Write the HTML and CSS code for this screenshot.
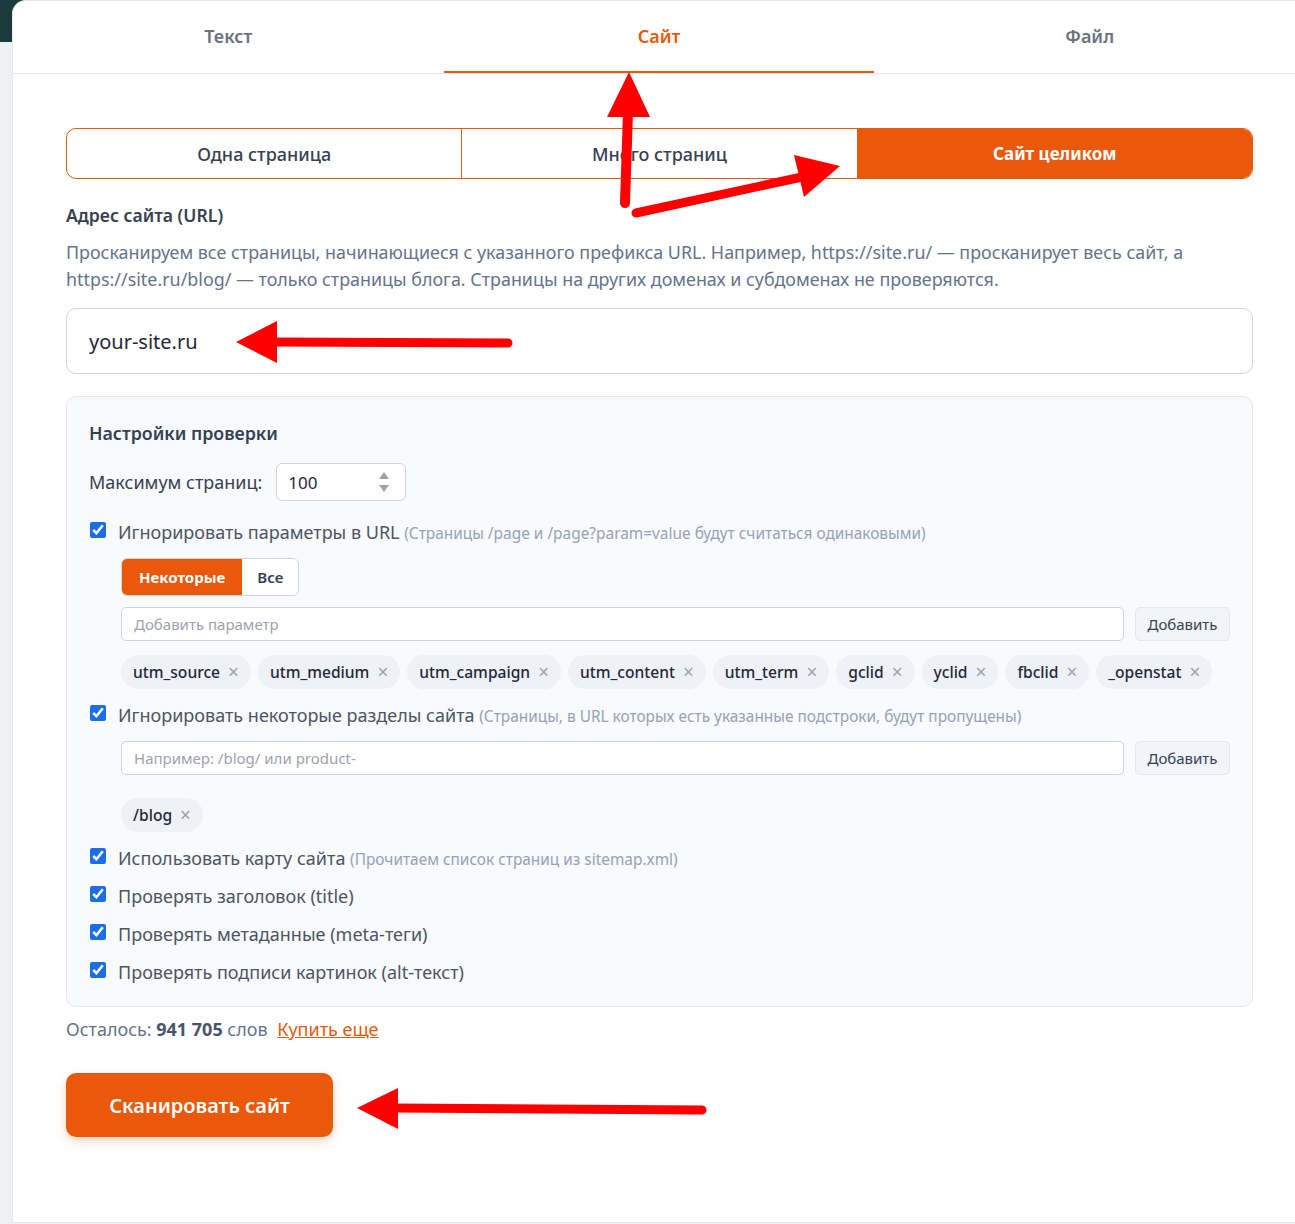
FILE: index.html
```html
<!DOCTYPE html>
<html lang="ru">
<head>
    <meta charset="UTF-8">
    <meta name="viewport" content="width=device-width, initial-scale=1.0">
    <title>Сканирование сайта</title>
    <link rel="stylesheet" href="styles.css">
</head>
<body>
    <div class="card">
        <nav class="tabs">
            <div class="tab">Текст</div>
            <div class="tab active">Сайт</div>
            <div class="tab">Файл</div>
        </nav>

        <div class="content">
            <div class="modes">
                <div class="mode">Одна страница</div>
                <div class="mode">Много страниц</div>
                <div class="mode active">Сайт целиком</div>
            </div>

            <div class="field-label">Адрес сайта (URL)</div>
            <p class="hint">Просканируем все страницы, начинающиеся с указанного префикса URL. Например, https://site.ru/ — просканирует весь сайт, а https://site.ru/blog/ — только страницы блога. Страницы на других доменах и субдоменах не проверяются.</p>
            <input class="url" type="text" value="your-site.ru">

            <div class="settings">
                <div class="settings-title">Настройки проверки</div>

                <div class="max-row">
                    <span>Максимум страниц:</span>
                    <div class="num">
                        <span>100</span>
                        <svg width="10" height="22" viewBox="0 0 10 22"><path d="M5 1 L10 8 L0 8 Z" fill="#9ca3af"/><path d="M5 21 L10 14 L0 14 Z" fill="#9ca3af"/></svg>
                    </div>
                </div>

                <label class="check">
                    <input type="checkbox" checked>
                    <span>Игнорировать параметры в URL <small>(Страницы /page и /page?param=value будут считаться одинаковыми)</small></span>
                </label>
                <div class="sub">
                    <div class="toggle">
                        <span class="on">Некоторые</span>
                        <span>Все</span>
                    </div>
                    <div class="add-row">
                        <input type="text" placeholder="Добавить параметр">
                        <button>Добавить</button>
                    </div>
                    <div class="chips">
                        <span class="chip">utm_source<i>×</i></span>
                        <span class="chip">utm_medium<i>×</i></span>
                        <span class="chip">utm_campaign<i>×</i></span>
                        <span class="chip">utm_content<i>×</i></span>
                        <span class="chip">utm_term<i>×</i></span>
                        <span class="chip">gclid<i>×</i></span>
                        <span class="chip">yclid<i>×</i></span>
                        <span class="chip">fbclid<i>×</i></span>
                        <span class="chip">_openstat<i>×</i></span>
                    </div>
                </div>

                <label class="check">
                    <input type="checkbox" checked>
                    <span>Игнорировать некоторые разделы сайта <small>(Страницы, в URL которых есть указанные подстроки, будут пропущены)</small></span>
                </label>
                <div class="sub">
                    <div class="add-row">
                        <input type="text" placeholder="Например: /blog/ или product-">
                        <button>Добавить</button>
                    </div>
                    <div class="chips spaced">
                        <span class="chip">/blog<i>×</i></span>
                    </div>
                </div>

                <label class="check">
                    <input type="checkbox" checked>
                    <span>Использовать карту сайта <small>(Прочитаем список страниц из sitemap.xml)</small></span>
                </label>
                <label class="check">
                    <input type="checkbox" checked>
                    <span>Проверять заголовок (title)</span>
                </label>
                <label class="check">
                    <input type="checkbox" checked>
                    <span>Проверять метаданные (meta-теги)</span>
                </label>
                <label class="check">
                    <input type="checkbox" checked>
                    <span>Проверять подписи картинок (alt-текст)</span>
                </label>
            </div>

            <div class="balance">Осталось: <b>941 705</b> слов <a href="#">Купить еще</a></div>

            <button class="scan">Сканировать сайт</button>
        </div>
    </div>

    <!-- красные стрелки поверх скриншота -->
    <svg class="marks" width="1295" height="1224" viewBox="0 0 1295 1224">
        <g stroke="#ff0000" stroke-linecap="round" fill="none">
            <line x1="625" y1="203" x2="628" y2="112" stroke-width="10"/>
            <line x1="636" y1="213" x2="802" y2="177" stroke-width="9"/>
            <line x1="508" y1="343" x2="272" y2="342" stroke-width="9"/>
            <line x1="702" y1="1110" x2="392" y2="1108" stroke-width="9"/>
        </g>
        <g fill="#ff0000">
            <polygon points="629,72 607,117 650,117"/>
            <polygon points="840,166 794,155 804,197"/>
            <polygon points="236,342 277,321 277,363"/>
            <polygon points="357,1108 398,1088 398,1129"/>
        </g>
    </svg>
</body>
</html>
```

FILE: styles.css
```css
body {
    margin: 0;
    font-family: "Noto Sans", "Open Sans", sans-serif;
    background: linear-gradient(#1c3a3b 0, #1c3a3b 42px, #eef0f3 42px);
    overflow: hidden;
    height: 1224px;
    position: relative;
}
.card {
    width: 1293px;
    margin-left: 12px;
    background: white;
    border: 1px solid #e2e8f0;
    border-right: none;
    border-radius: 14px 0 0 0;
    box-sizing: border-box;
    height: 1223px;
}
.tabs {
    display: flex;
    border-bottom: 1px solid #e5e7eb;
    height: 73px;
    box-sizing: border-box;
}
.tab {
    flex: 1;
    text-align: center;
    font-size: 18px;
    font-weight: 600;
    color: #6b7280;
    padding-top: 23px;
    box-sizing: border-box;
    height: 72px;
}
.tab.active {
    color: #ea580c;
    border-bottom: 2px solid #ea580c;
}
.content {
    padding: 54px 52px 0 53px;
}
.modes {
    display: flex;
    border: 1px solid #ea580c;
    border-radius: 10px;
    overflow: hidden;
    height: 51px;
    box-sizing: border-box;
}
.mode {
    flex: 1;
    display: flex;
    align-items: center;
    justify-content: center;
    font-size: 18px;
    font-weight: 500;
    color: #374151;
    border-left: 1px solid #ea580c;
}
.mode:first-child {
    border-left: none;
}
.mode.active {
    background: #ea580c;
    color: white;
    font-size: 17px;
    font-weight: 700;
}
.field-label {
    margin-top: 24px;
    font-size: 17.6px;
    font-weight: 600;
    color: #374151;
    line-height: 24px;
}
.hint {
    margin: 12px 0 15px;
    font-size: 17.9px;
    line-height: 27px;
    color: #64748b;
}
.url {
    display: block;
    width: 100%;
    height: 66px;
    box-sizing: border-box;
    border: 1px solid #d1d5db;
    border-radius: 10px;
    padding: 0 22px;
    font-family: inherit;
    font-size: 20px;
    color: #1f2937;
    outline: none;
}
.settings {
    margin-top: 22px;
    background: #f8fafc;
    border: 1px solid #e5e7eb;
    border-radius: 10px;
    padding: 24px 22px 20px;
}
.settings-title {
    font-size: 17.8px;
    font-weight: 600;
    color: #334155;
    line-height: 24px;
}
.max-row {
    display: flex;
    align-items: center;
    gap: 14px;
    margin-top: 18px;
    font-size: 18px;
    color: #374151;
}
.num {
    width: 130px;
    height: 38px;
    box-sizing: border-box;
    background: white;
    border: 1px solid #d1d5db;
    border-radius: 6px;
    display: flex;
    align-items: center;
    justify-content: space-between;
    padding: 0 16px 0 11px;
    font-size: 17px;
    color: #1f2937;
}
.check {
    display: flex;
    align-items: center;
    gap: 12px;
    height: 28px;
    margin-top: 17px;
    font-size: 18px;
    color: #4b5563;
}
.check input {
    width: 16px;
    height: 16px;
    margin: -4px 0 0 1px;
    accent-color: #1a6ee8;
}
.check small {
    font-size: 15.4px;
    color: #94a3b8;
}
.check + .check {
    margin-top: 10px;
}
.sub + .check {
    margin-top: 12px;
}
.sub {
    padding-left: 32px;
    margin-top: 12px;
}
.toggle {
    display: inline-flex;
    height: 38px;
    border: 1px solid #d1d5db;
    border-radius: 6px;
    overflow: hidden;
    background: white;
    box-sizing: border-box;
    margin-bottom: 11px;
}
.toggle span {
    display: flex;
    align-items: center;
    padding: 0 15px;
    font-size: 15px;
    font-weight: 600;
    color: #374151;
}
.toggle .on {
    padding: 0 17px;
    background: #ea580c;
    color: white;
    font-weight: 700;
}
.add-row {
    display: flex;
    gap: 11px;
    height: 34px;
}
.add-row input {
    flex: 1;
    border: 1px solid #cbd5e1;
    border-radius: 5px;
    padding: 0 12px;
    font-family: inherit;
    font-size: 15px;
    color: #1f2937;
    background: white;
    outline: none;
}
.add-row input::placeholder {
    color: #9ca3af;
}
.add-row button {
    width: 95px;
    border: 1px solid #e2e8f0;
    border-radius: 5px;
    background: #f1f5f9;
    font-family: inherit;
    font-size: 15px;
    color: #374151;
}
.chips {
    display: flex;
    flex-wrap: wrap;
    gap: 7px;
    margin-top: 14px;
}
.chips.spaced {
    margin-top: 23px;
}
.chip {
    display: inline-flex;
    align-items: center;
    height: 34px;
    padding: 0 12px;
    border-radius: 17px;
    background: #eef2f6;
    font-size: 15.6px;
    font-weight: 500;
    color: #1e293b;
}
.chip i {
    font-style: normal;
    font-weight: 400;
    font-size: 19px;
    color: #9ca3af;
    margin-left: 8px;
}
.balance {
    margin-top: 10px;
    font-size: 18px;
    line-height: 24px;
    color: #64748b;
}
.balance b {
    color: #475569;
}
.balance a {
    color: #ea580c;
    margin-left: 5px;
}
.scan {
    margin-top: 32px;
    width: 267px;
    height: 64px;
    border: none;
    border-radius: 10px;
    background: #ea580c;
    color: white;
    font-family: inherit;
    font-size: 20px;
    font-weight: 600;
    box-shadow: 0 4px 10px rgba(234, 88, 12, 0.25);
}
.marks {
    position: absolute;
    top: 0;
    left: 0;
    pointer-events: none;
}
```
